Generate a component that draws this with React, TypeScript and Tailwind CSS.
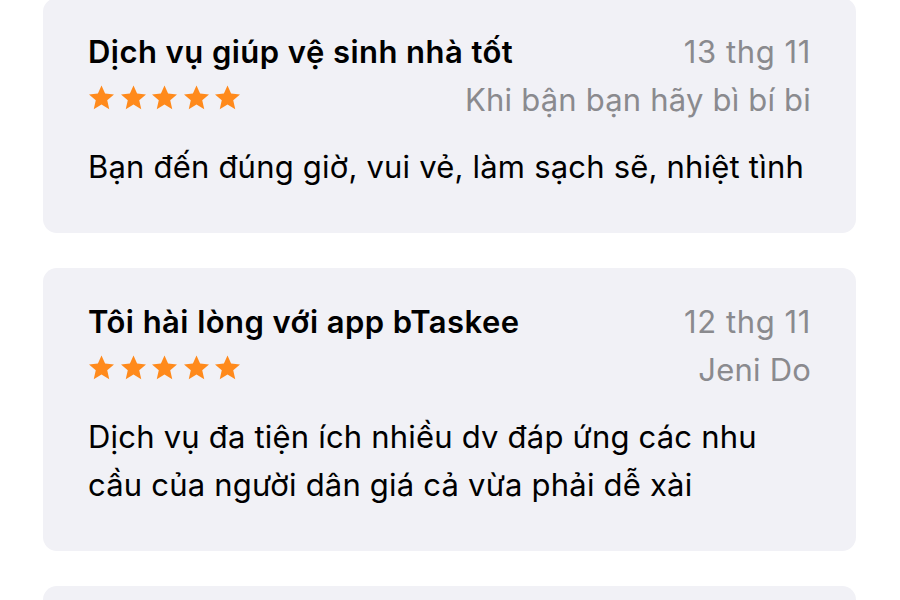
import React from "react";

function Star() {
  return (
    <svg width="27" height="26" viewBox="0 0 24 23" className="block">
      <path
        d="M12 0.3l3.2 7.3 7.9.7-6 5.3 1.8 7.8L12 17.3l-6.9 4.1 1.8-7.8-6-5.3 7.9-.7z"
        fill="#ff8a1c"
      />
    </svg>
  );
}

function Stars() {
  return (
    <div className="flex gap-[4.5px]">
      <Star />
      <Star />
      <Star />
      <Star />
      <Star />
    </div>
  );
}

type Review = { title: string; date: string; author: string; body: string[] };

const reviews: Review[] = [
  {
    title: "Dịch vụ giúp vệ sinh nhà tốt",
    date: "13 thg 11",
    author: "Khi bận bạn hãy bì bí bi",
    body: ["Bạn đến đúng giờ, vui vẻ, làm sạch sẽ, nhiệt tình"],
  },
  {
    title: "Tôi hài lòng với app bTaskee",
    date: "12 thg 11",
    author: "Jeni Do",
    body: [
      "Dịch vụ đa tiện ích nhiều dv đáp ứng các nhu",
      "cầu của người dân giá cả vừa phải dễ xài",
    ],
  },
];

function Card({ r }: { r: Review }) {
  return (
    <div className="rounded-[14px] bg-[#f1f1f6] px-[45px] pt-[34px] pb-[42px]">
      <div className="flex h-[40px] items-center justify-between">
        <div className="text-[31px] font-semibold tracking-[0.45px] text-black">{r.title}</div>
        <div className="text-[31px] text-[#8a8a8e] tracking-[0.6px]">{r.date}</div>
      </div>
      <div className="mt-[6px] flex h-[40px] items-center justify-between">
        <Stars />
        <div className="text-[31px] text-[#8a8a8e] tracking-[0.2px] pt-[4px]">{r.author}</div>
      </div>
      <div className="mt-[25px] text-[31px] leading-[48px] text-black tracking-[0.2px]">
        {r.body.map((l, i) => (
          <div key={i}>{l}</div>
        ))}
      </div>
    </div>
  );
}

export default function App() {
  return (
    <div
      className="h-[600px] w-[900px] overflow-hidden bg-white"
      style={{ fontFamily: "Inter, 'Noto Sans', sans-serif" }}
    >
      <div className="mx-[43px] -mt-[2px] flex w-[813px] flex-col gap-[35px]">
        {reviews.map((r, i) => (
          <Card key={i} r={r} />
        ))}
        <div className="h-[120px] rounded-[14px] bg-[#f1f1f6]" />
      </div>
    </div>
  );
}
